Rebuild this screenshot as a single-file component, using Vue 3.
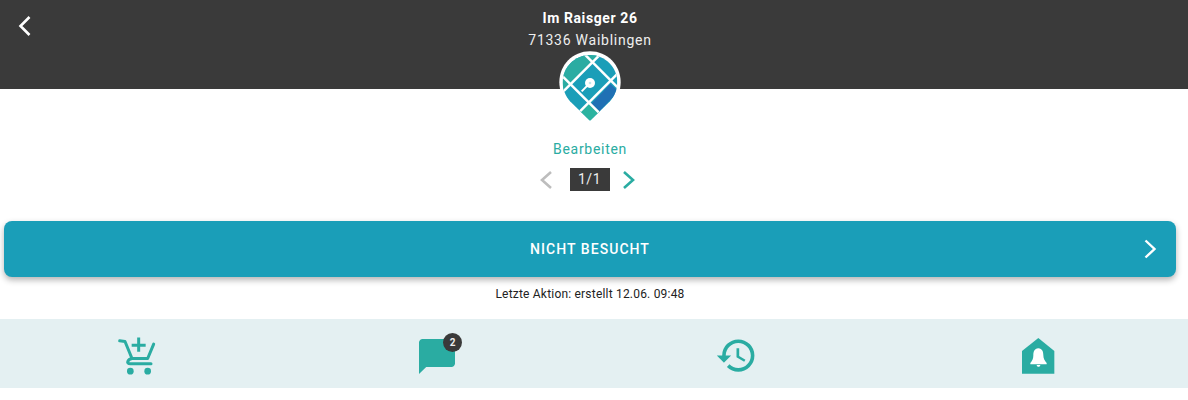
<script setup>
const roads = [
  "M70 0 L210 140",
  "M-62 0 L170 232",
  "M155 0 L-30 185",
  "M265 0 L30 235",
];
</script>

<template>
  <div class="page">
    <header class="topbar">
      <button class="back" aria-label="Zurück">
        <svg width="14" height="22" viewBox="0 0 14 22"><path d="M11.5 2 L2.5 11 L11.5 20" /></svg>
      </button>
      <div class="address">
        <div class="street">Im Raisger 26</div>
        <div class="city">71336 Waiblingen</div>
      </div>
      <div></div>
    </header>

    <main class="content">
      <svg class="pin" width="70" height="76" viewBox="0 0 210 228">
        <defs>
          <clipPath id="inner">
            <path d="M105 21 C150 21 187 58 187 103 C187 125 178 145 165 160 L105 218 L45 160 C32 145 23 125 23 103 C23 58 60 21 105 21 Z" />
          </clipPath>
        </defs>
        <path d="M105 10 C157 10 197 51 197 103 C197 128 187 151 172 167 L105 232 L38 167 C23 151 13 128 13 103 C13 51 53 10 105 10 Z" fill="#fff" />
        <g clip-path="url(#inner)">
          <rect x="0" y="0" width="210" height="228" fill="#1a9eb8" />
          <path d="M0 150 V0 H155 Z" fill="#2aaca2" />
          <path d="M108 168 L166 108 L190 130 L132 192 Z" fill="#1f70b4" />
          <path d="M70 195 L105 165 L140 195 L105 225 Z" fill="#2bb3a0" />
          <path v-for="road in roads" :key="road" :d="road" stroke="#fff" stroke-width="7.5" fill="none" />
        </g>
        <circle cx="105" cy="105" r="15" fill="#fff" />
        <circle cx="105" cy="105" r="4" fill="#bfe6ec" />
        <path d="M97 113 L80 130" stroke="#fff" stroke-width="6" />
      </svg>

      <a class="edit">Bearbeiten</a>

      <div class="pager">
        <svg width="14" height="20" viewBox="0 0 14 20"><path class="off" d="M12 2 L3 10 L12 18" /></svg>
        <span class="count">1/1</span>
        <svg width="14" height="20" viewBox="0 0 14 20"><path class="on" d="M2 2 L11 10 L2 18" /></svg>
      </div>

      <button class="action">
        <span>NICHT BESUCHT</span>
        <svg class="action-arrow" width="14" height="20" viewBox="0 0 14 20"><path d="M2.5 1.5 L11.5 10 L2.5 18.5" /></svg>
      </button>

      <p class="last">Letzte Aktion: erstellt 12.06. 09:48</p>
    </main>

    <nav class="tabs">
      <svg class="tab" width="40" height="42" viewBox="80 45 120 125">
        <path d="M88 62 L104 64 L125 115 L172 115 L190 72" fill="none" stroke="#2aaca2" stroke-width="9" stroke-linejoin="round" stroke-linecap="round" />
        <path d="M125 115 C112 117 106 131 120 131 L182 131" fill="none" stroke="#2aaca2" stroke-width="9" stroke-linecap="round" />
        <path d="M145 52 V95 M124 75 H166" stroke="#2aaca2" stroke-width="9" />
        <circle cx="120" cy="153" r="10" fill="#2aaca2" />
        <circle cx="172" cy="153" r="10" fill="#2aaca2" />
      </svg>

      <div class="tab chat">
        <svg width="36" height="35" viewBox="2 2 20 20" preserveAspectRatio="none">
          <path d="M20 2H4c-1.1 0-2 .9-2 2v18l4-4h14c1.1 0 2-.9 2-2V4c0-1.1-.9-2-2-2z" fill="#2aaca2" />
        </svg>
        <span class="badge">2</span>
      </div>

      <svg class="tab" width="43" height="43" viewBox="0 0 24 24">
        <path d="M13 3a9 9 0 0 0-9 9H1l3.89 3.89.07.14L9 12H6c0-3.87 3.13-7 7-7s7 3.13 7 7-3.13 7-7 7c-1.93 0-3.68-.79-4.94-2.06l-1.42 1.42A8.954 8.954 0 0 0 13 21a9 9 0 0 0 0-18zm-1 5v5l4.28 2.54.72-1.21-3.5-2.08V8H12z" fill="#2aaca2" />
      </svg>

      <svg class="tab" width="40" height="36" viewBox="954 58 120 108">
        <path d="M966 165 V97 L1015 58 L1063 97 V165 Z" fill="#2aaca2" />
        <path d="M1015 89 C1003 90 1000 99 1000 110 C1000 120 997 127 991 133 V137 H1040 V133 C1034 127 1030 120 1030 110 C1030 99 1027 90 1015 89 Z" fill="#fff" />
        <path d="M1010 139 H1021 C1021 146 1010 146 1010 139 Z" fill="#fff" />
      </svg>
    </nav>
  </div>
</template>

<style scoped>
.page {
  width: 1188px;
  height: 400px;
  background: #fff;
  font-family: Roboto, "Liberation Sans", sans-serif;
  overflow: hidden;
}

.topbar {
  height: 89px;
  background: #3a3a3a;
  color: #fff;
  display: grid;
  grid-template-columns: 1fr auto 1fr;
  padding-right: 8px;
  box-sizing: border-box;
}

.back {
  justify-self: start;
  align-self: start;
  margin: 15px 0 0 18px;
  padding: 0;
  border: 0;
  background: none;
  line-height: 0;
}

.back path {
  fill: none;
  stroke: #fff;
  stroke-width: 2.6;
}

.address {
  text-align: center;
  padding-top: 7px;
  font-size: 14px;
  line-height: 23px;
  letter-spacing: 0.75px;
}

.street {
  font-weight: 700;
  letter-spacing: 0.6px;
  height: 22px;
}

.city {
  color: #eee;
}

.content {
  display: flex;
  flex-direction: column;
  align-items: center;
  padding: 0 12px 0 4px;
}

.pin {
  margin-top: -41px;
  position: relative;
  display: block;
}

.edit {
  margin-top: 15px;
  font-size: 14px;
  line-height: 20px;
  letter-spacing: 0.7px;
  color: #2aaca2;
}

.pager {
  display: flex;
  align-items: center;
  margin-top: 9px;
  padding-right: 6px;
}

.pager path {
  fill: none;
  stroke-width: 2.6;
}

.off {
  stroke: #bdbdbd;
}

.on {
  stroke: #2aaca2;
}

.count {
  width: 40px;
  height: 23px;
  margin: 0 12px 0 17px;
  background: #3a3a3a;
  color: #eee;
  font-size: 14px;
  line-height: 23px;
  letter-spacing: 0.5px;
  text-align: center;
}

.action {
  position: relative;
  width: 100%;
  height: 56px;
  margin-top: 30px;
  border: 0;
  border-radius: 8px;
  background: #1a9eb8;
  color: #fff;
  font-family: inherit;
  font-size: 14px;
  font-weight: 500;
  letter-spacing: 1.05px;
  box-shadow: 0 3px 6px rgba(0, 0, 0, 0.3);
}

.action-arrow {
  position: absolute;
  right: 19px;
  top: 18px;
}

.action-arrow path {
  fill: none;
  stroke: #fff;
  stroke-width: 2.4;
}

.last {
  margin: 9px 0 0;
  font-size: 12px;
  line-height: 16px;
  letter-spacing: 0.2px;
  color: #222;
}

.tabs {
  height: 69px;
  margin-top: 17px;
  padding: 4px 130px 0 117px;
  background: #e4f0f2;
  display: flex;
  align-items: center;
  justify-content: space-between;
  box-sizing: border-box;
}

.tab {
  display: block;
}

.chat {
  position: relative;
  line-height: 0;
  margin: 1px 0 0 2px;
}

.chat svg {
  display: block;
}

.badge {
  position: absolute;
  top: -6px;
  right: -7px;
  width: 19px;
  height: 19px;
  border-radius: 50%;
  background: #3a3a3a;
  color: #eee;
  font-size: 10px;
  font-weight: 700;
  line-height: 19px;
  text-align: center;
}
</style>
